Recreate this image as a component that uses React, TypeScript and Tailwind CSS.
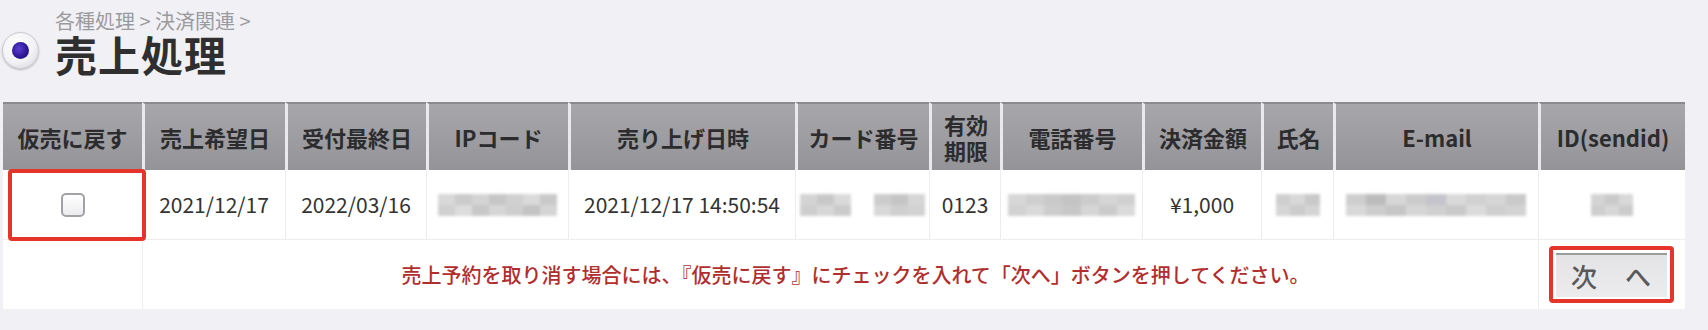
import React from "react";

/**
 * 売上処理 screen: a single pending sale with the "back to provisional"
 * checkbox and the 次へ button. Masked cells are drawn as blurred mosaics.
 */

const headers = [
  "仮売に戻す",
  "売上希望日",
  "受付最終日",
  "IPコード",
  "売り上げ日時",
  "カード番号",
  "有効期限",
  "電話番号",
  "決済金額",
  "氏名",
  "E-mail",
  "ID(sendid)",
];

function Mosaic({ tones, width }: { tones: string[][]; width: string }) {
  return (
    <div className={`mx-auto flex flex-col blur-[1.5px] ${width}`}>
      {tones.map((row, i) => (
        <div key={i} className="flex h-[11px]">
          {row.map((c, j) => (
            <div key={j} className="flex-1" style={{ backgroundColor: c }} />
          ))}
        </div>
      ))}
    </div>
  );
}

function RadioBullet() {
  return (
    <div className="flex h-[37px] w-[37px] items-center justify-center rounded-full border border-[#c9c9cf] bg-[radial-gradient(circle_at_40%_35%,#ffffff_0%,#f2f2f5_55%,#cfcfd6_100%)] shadow-[0_1px_2px_rgba(0,0,0,0.25)]">
      <div className="h-[17px] w-[17px] rounded-full bg-[radial-gradient(circle_at_40%_40%,#5a3fd0_0%,#2f1799_55%,#1c0c63_100%)]" />
    </div>
  );
}

export default function App() {
  return (
    <div className="h-[330px] w-full bg-[#f1f1f5] pt-[9px] font-['Noto_Sans_CJK_JP',sans-serif]">
      <div className="flex items-end gap-[16px] pl-[2px]">
        <div className="mb-[6px]">
          <RadioBullet />
        </div>
        <div className="flex flex-col">
          <div className="text-[20px] leading-[24px] text-[#9b9b9f]">各種処理 &gt; 決済関連 &gt;</div>
          <h1 className="text-[42px] font-bold leading-[42px] tracking-[1px] text-[#2f2f2f]">売上処理</h1>
        </div>
      </div>

      <table className="ml-[3px] mt-[27px] w-[1682px] table-fixed border-separate border-spacing-0">
        <colgroup>
          <col className="w-[139px]" />
          <col className="w-[143px]" />
          <col className="w-[141px]" />
          <col className="w-[142px]" />
          <col className="w-[227px]" />
          <col className="w-[134px]" />
          <col className="w-[71px]" />
          <col className="w-[142px]" />
          <col className="w-[119px]" />
          <col className="w-[72px]" />
          <col className="w-[205px]" />
          <col className="w-[147px]" />
        </colgroup>
        <thead>
          <tr className="h-[68px]">
            {headers.map((h, i) => (
              <th
                key={h}
                className={`border-t-2 border-t-[#8a8a8f] bg-gradient-to-b from-[#a6a6ab] via-[#9d9da2] to-[#939398] p-0 text-center align-middle text-[22px] font-bold leading-[26px] text-[#2c2c2e] ${
                  i > 0 ? "border-l-[3px] border-l-[#e9e9ee]" : ""
                }`}
              >
                {h === "有効期限" ? (
                  <div className="flex flex-col">
                    <span>有効</span>
                    <span>期限</span>
                  </div>
                ) : (
                  h
                )}
              </th>
            ))}
          </tr>
        </thead>
        <tbody className="bg-white text-[21px] text-[#333]">
          <tr className="h-[70px] text-center">
            <td className="relative border-b border-[#ededf0] p-0">
              <div className="mx-auto h-[24px] w-[24px] rounded-[5px] border-2 border-[#a2a2a6] bg-gradient-to-b from-white to-[#ececef]" />
              <div className="absolute left-[5px] top-[-1px] h-[72px] w-[138px] rounded-[4px] border-4 border-[#e5352a]" />
            </td>
            <td className="border-b border-l border-[#ededf0] p-0">2021/12/17</td>
            <td className="border-b border-l border-[#ededf0] p-0">2022/03/16</td>
            <td className="border-b border-l border-[#ededf0] p-0">
              <Mosaic
                width="w-[119px]"
                tones={[
                  ["#d8d8d8", "#cbcbcb", "#d4d4d4", "#c6c6c6", "#d0d0d0", "#dadada", "#c9c9c9"],
                  ["#d0d0d0", "#dcdcdc", "#c8c8c8", "#d6d6d6", "#cecece", "#c4c4c4", "#d5d5d5"],
                ]}
              />
            </td>
            <td className="border-b border-l border-[#ededf0] p-0">2021/12/17 14:50:54</td>
            <td className="border-b border-l border-[#ededf0] p-0">
              <div className="flex justify-center gap-[14px]">
                <Mosaic
                  width="w-[51px]"
                  tones={[
                    ["#d4d4d4", "#c8c8c8", "#dadada"],
                    ["#cecece", "#d7d7d7", "#cbcbcb"],
                  ]}
                />
                <Mosaic
                  width="w-[51px]"
                  tones={[
                    ["#cccccc", "#c5c5c5", "#d6d6d6"],
                    ["#d8d8d8", "#cfcfcf", "#d2d2d2"],
                  ]}
                />
              </div>
            </td>
            <td className="border-b border-l border-[#ededf0] p-0">0123</td>
            <td className="border-b border-l border-[#ededf0] p-0">
              <Mosaic
                width="w-[128px]"
                tones={[
                  ["#d7d7d7", "#cfcfcf", "#c9c9c9", "#c4c4c4", "#cccccc", "#d5d5d5", "#d0d0d0"],
                  ["#d2d2d2", "#d9d9d9", "#cdcdcd", "#c7c7c7", "#d6d6d6", "#cbcbcb", "#dadada"],
                ]}
              />
            </td>
            <td className="border-b border-l border-[#ededf0] p-0">¥1,000</td>
            <td className="border-b border-l border-[#ededf0] p-0">
              <Mosaic
                width="w-[44px]"
                tones={[
                  ["#cfcfcf", "#d8d8d8", "#c9c9c9"],
                  ["#d6d6d6", "#cccccc", "#d4d4d4"],
                ]}
              />
            </td>
            <td className="border-b border-l border-[#ededf0] p-0">
              <Mosaic
                width="w-[180px]"
                tones={[
                  ["#cecece", "#bcbcbc", "#d7d7d7", "#cccccc", "#c4c4cb", "#d9d9d9", "#d1d1d1", "#d5d5d5", "#cacaca"],
                  ["#d8d8d8", "#cdcdcd", "#c6c6c6", "#d6d6d6", "#d0d0d0", "#c9c9c9", "#dbdbdb", "#cfcfcf", "#d3d3d3"],
                ]}
              />
            </td>
            <td className="border-b border-l border-[#ededf0] p-0">
              <Mosaic
                width="w-[42px]"
                tones={[
                  ["#d4d4d4", "#cacaca", "#d8d8d8"],
                  ["#cecece", "#d7d7d7", "#cccccc"],
                ]}
              />
            </td>
          </tr>
          <tr className="h-[69px]">
            <td className="p-0" />
            <td
              colSpan={10}
              className="border-l border-[#ededf0] p-0 text-center text-[20px] font-medium text-[#b02e2e]"
            >
              <span className="relative left-[15px]">
                売上予約を取り消す場合には、『仮売に戻す』にチェックを入れて「次へ」ボタンを押してください。
              </span>
            </td>
            <td className="border-l border-[#ededf0] p-0">
              <div className="relative ml-[17px] w-[111px]">
                <button className="flex h-[44px] w-[111px] items-center justify-center border-t-2 border-t-[#9c9c9c] bg-gradient-to-b from-[#e4e4e6] to-[#ececee] text-[26px] font-medium leading-none tracking-[1px] text-[#5a5a5a]">
                  次　へ
                </button>
                <div className="absolute -inset-x-[7px] -bottom-[6px] -top-[7px] rounded-[4px] border-4 border-[#e5352a]" />
              </div>
            </td>
          </tr>
        </tbody>
      </table>
    </div>
  );
}
